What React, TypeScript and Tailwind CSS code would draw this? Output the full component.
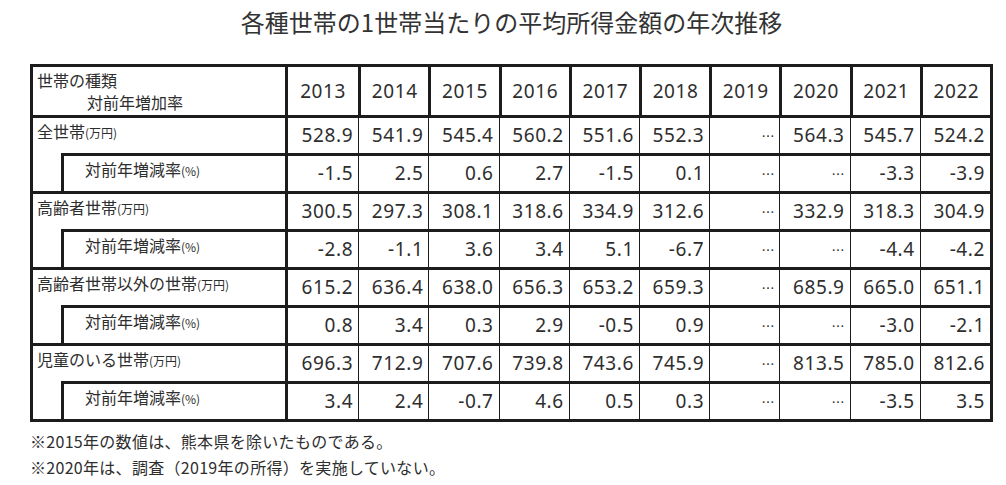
const YEARS = ["2013", "2014", "2015", "2016", "2017", "2018", "2019", "2020", "2021", "2022"];

const NA = "…";

const GROUPS = [
  {
    label: "全世帯",
    values: ["528.9", "541.9", "545.4", "560.2", "551.6", "552.3", NA, "564.3", "545.7", "524.2"],
    rates: ["-1.5", "2.5", "0.6", "2.7", "-1.5", "0.1", NA, NA, "-3.3", "-3.9"],
  },
  {
    label: "高齢者世帯",
    values: ["300.5", "297.3", "308.1", "318.6", "334.9", "312.6", NA, "332.9", "318.3", "304.9"],
    rates: ["-2.8", "-1.1", "3.6", "3.4", "5.1", "-6.7", NA, NA, "-4.4", "-4.2"],
  },
  {
    label: "高齢者世帯以外の世帯",
    values: ["615.2", "636.4", "638.0", "656.3", "653.2", "659.3", NA, "685.9", "665.0", "651.1"],
    rates: ["0.8", "3.4", "0.3", "2.9", "-0.5", "0.9", NA, NA, "-3.0", "-2.1"],
  },
  {
    label: "児童のいる世帯",
    values: ["696.3", "712.9", "707.6", "739.8", "743.6", "745.9", NA, "813.5", "785.0", "812.6"],
    rates: ["3.4", "2.4", "-0.7", "4.6", "0.5", "0.3", NA, NA, "-3.5", "3.5"],
  },
];

const jp = "font-['Noto_Sans_CJK_JP',sans-serif]";
const num = "font-['Noto_Sans','Noto_Sans_CJK_JP',sans-serif]";

function ValueRow({ cells, top }: { cells: string[]; top?: boolean }) {
  return (
    <div className={`grid h-[35px] grid-cols-10 ${top ? "h-[38px] border-t-[3px] border-[#1c1c1c]" : ""}`}>
      {cells.map((v, i) => (
        <div
          key={i}
          className={`flex items-center justify-end pr-[5px] text-[19px] tracking-[0.6px] ${num} ${
            i > 0 ? "border-l border-[#1c1c1c]" : ""
          }`}
        >
          {v === NA ? <span className={`${jp} text-[13px] tracking-normal`}>{v}</span> : v}
        </div>
      ))}
    </div>
  );
}

export default function App() {
  return (
    <div className="h-[485px] w-[1006px] overflow-hidden bg-white text-[#2e2e2e]">
      <div className="ml-[30px] w-[963px]">
        <div className={`flex h-[44px] items-center justify-center text-[24px] text-[#333] ${jp}`}>
          各種世帯の1世帯当たりの平均所得金額の年次推移
        </div>

        <div className="mt-[20px] border-[3px] border-[#1c1c1c]">
          {/* header */}
          <div className="flex h-[51px] border-b-[3px] border-[#1c1c1c]">
            <div className={`flex w-[255px] flex-col border-r-[3px] border-[#1c1c1c] pl-[4px] pt-[2px] text-[16px] leading-[22px] ${jp}`}>
              <span>世帯の種類</span>
              <span className="pl-[50px]">対前年増加率</span>
            </div>
            <div className="grid flex-1 grid-cols-10">
              {YEARS.map((y, i) => (
                <div
                  key={y}
                  className={`flex items-center justify-center text-[19px] tracking-[0.6px] ${num} ${
                    i > 0 ? "border-l-[3px] border-[#1c1c1c]" : ""
                  }`}
                >
                  {y}
                </div>
              ))}
            </div>
          </div>

          {GROUPS.map((g, gi) => (
            <div key={g.label} className={`flex ${gi > 0 ? "border-t-[3px] border-[#1c1c1c]" : ""}`}>
              <div className={`flex w-[255px] flex-col border-r-[3px] border-[#1c1c1c] text-[16px] ${jp}`}>
                <div className="h-[35px] pl-[4px] pt-[2px] leading-[22px]">
                  {g.label}
                  <span className="text-[12px]">(万円)</span>
                </div>
                <div className="flex h-[38px]">
                  <div className="w-[28px]" />
                  <div className="flex-1 border-l-[3px] border-t-[3px] border-[#1c1c1c] pl-[21px] pt-[2px] leading-[22px]">
                    対前年増減率<span className="text-[12px]">(%)</span>
                  </div>
                </div>
              </div>
              <div className="flex flex-1 flex-col">
                <ValueRow cells={g.values} />
                <ValueRow cells={g.rates} top />
              </div>
            </div>
          ))}
        </div>

        <div className={`mt-[6px] text-[16px] leading-[26px] tracking-[0.3px] ${jp}`}>
          <p>※2015年の数値は、熊本県を除いたものである。</p>
          <p>※2020年は、調査（2019年の所得）を実施していない。</p>
        </div>
      </div>
    </div>
  );
}
